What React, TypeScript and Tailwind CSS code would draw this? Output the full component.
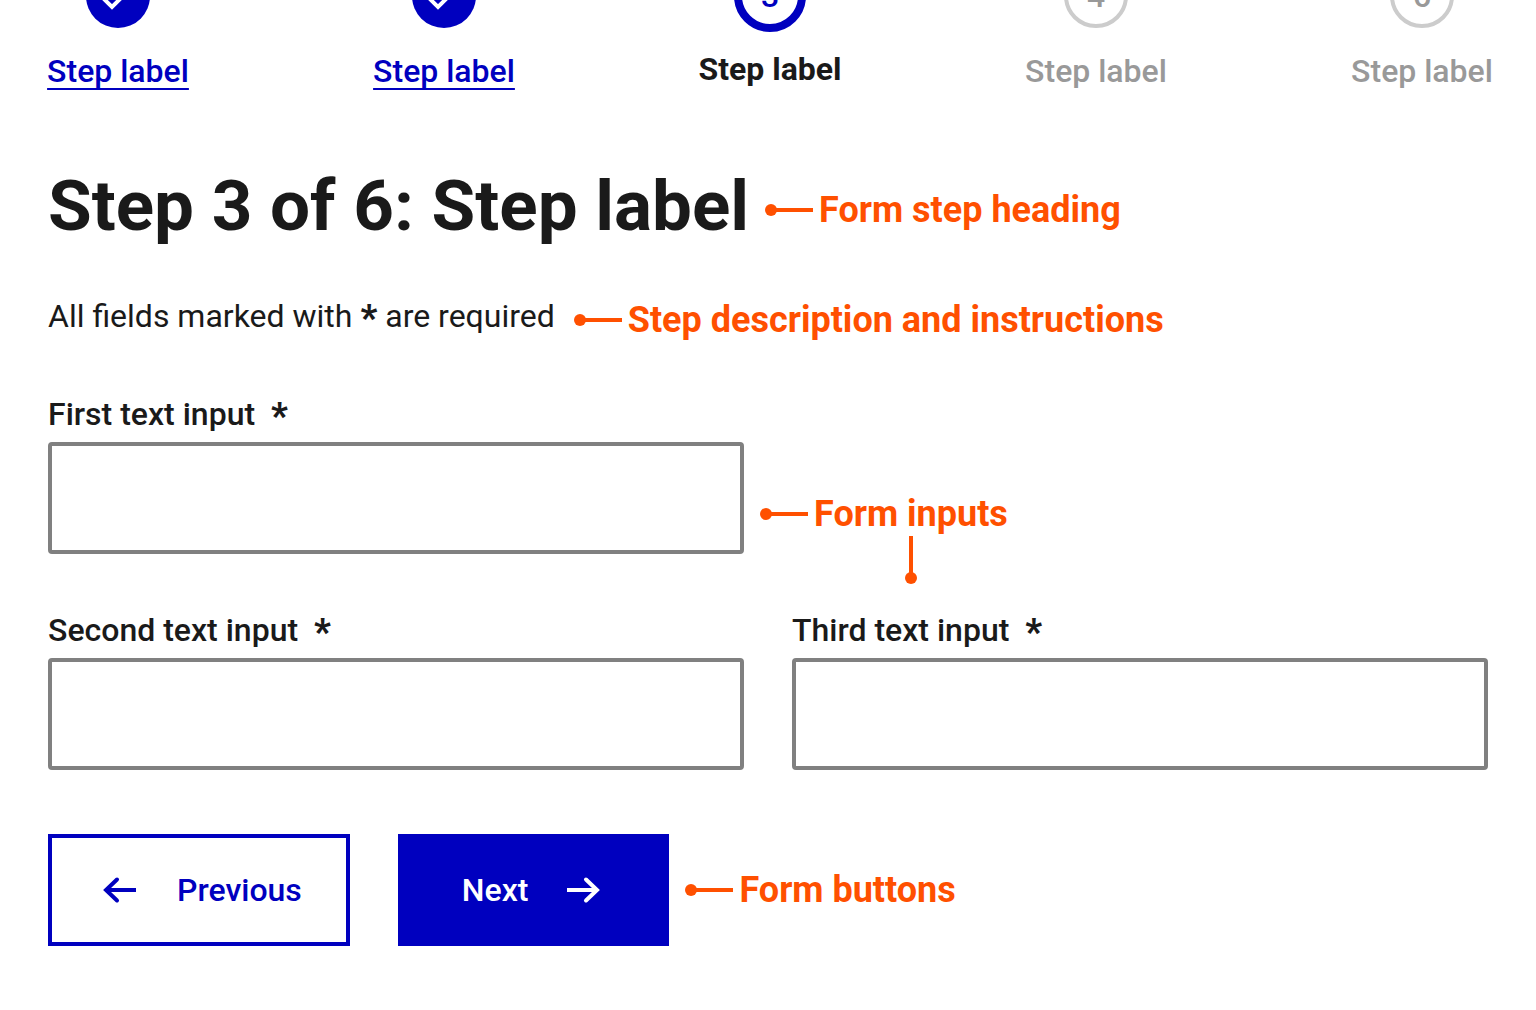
import type { ReactNode } from "react";

type StepState = "done" | "current" | "upcoming";

const steps: { number: number; state: StepState }[] = [
  { number: 1, state: "done" },
  { number: 2, state: "done" },
  { number: 3, state: "current" },
  { number: 4, state: "upcoming" },
  { number: 6, state: "upcoming" },
];

function Step({ number, state }: { number: number; state: StepState }) {
  if (state === "done") {
    return (
      <li className="flex w-36 flex-col items-center gap-[23px] pt-1">
        <span className="flex size-16 items-center justify-center rounded-full bg-[#0000bf]">
          <svg className="size-12" viewBox="0 0 48 48" fill="none" stroke="#fff" strokeWidth="4" aria-hidden="true">
            <path d="M8 25 18 35 39 14" />
          </svg>
        </span>
        <a href="#step" className="whitespace-nowrap font-medium leading-10 text-[#0000bf] underline decoration-2 underline-offset-6">
          Step label
        </a>
      </li>
    );
  }
  if (state === "current") {
    return (
      <li className="flex w-36 flex-col items-center gap-[17px]" aria-current="step">
        <span className="flex size-18 items-center justify-center rounded-full border-8 border-[#0000bf] font-medium text-[#0000bf]">
          {number}
        </span>
        <span className="whitespace-nowrap font-bold leading-10">Step label</span>
      </li>
    );
  }
  return (
    <li className="flex w-36 flex-col items-center gap-[23px] pt-1 text-[#999]">
      <span className="flex size-16 items-center justify-center rounded-full border-4 border-[#ccc] font-medium">
        {number}
      </span>
      <span className="whitespace-nowrap font-medium leading-10">Step label</span>
    </li>
  );
}

function Callout({ children }: { children: ReactNode }) {
  return (
    <div className="flex items-center gap-1.5 whitespace-nowrap text-4xl font-bold leading-10 text-[#ff5000]">
      <svg className="h-3 w-12 shrink-0" viewBox="0 0 48 12" fill="currentColor" aria-hidden="true">
        <circle cx="6" cy="6" r="6" />
        <path d="M6 4h42v4H6z" />
      </svg>
      {children}
    </div>
  );
}

function Field({ id, label }: { id: string; label: string }) {
  return (
    <div className="flex flex-col gap-2">
      <label htmlFor={id} className="flex h-10 gap-4 font-medium leading-10">
        {label}
        <span className="text-4xl font-black leading-11">*</span>
      </label>
      <input id={id} type="text" required className="h-28 w-full rounded-sm border-4 border-[#808080] bg-white px-6" />
    </div>
  );
}

export default function App() {
  return (
    <div className="overflow-hidden bg-white pb-16 font-['Roboto','Liberation_Sans',sans-serif] text-[32px] text-[#1a1a1a]">
      <nav aria-label="Form steps" className="-mt-10 pl-[46px] pr-[42px]">
        <ol className="flex justify-between">
          {steps.map((step) => (
            <Step key={step.number} number={step.number} state={step.state} />
          ))}
        </ol>
      </nav>

      <main className="px-12 pt-[75px]">
        <div className="flex items-center gap-4">
          <h1 className="whitespace-nowrap text-[71px] font-bold leading-20">Step 3 of 6: Step label</h1>
          <div className="pt-2">
            <Callout>Form step heading</Callout>
          </div>
        </div>

        <div className="mt-[50px] flex h-11 items-start gap-[19px]">
          <p className="flex gap-2 whitespace-nowrap leading-10">
            <span>All fields marked with</span>
            <span className="text-4xl font-black leading-11">*</span>
            <span>are required</span>
          </p>
          <div className="pt-1">
            <Callout>Step description and instructions</Callout>
          </div>
        </div>

        <form className="mt-[54px]" onSubmit={(event) => event.preventDefault()}>
          <div className="grid grid-cols-2 gap-x-12 gap-y-14">
            <div className="relative">
              <Field id="first" label="First text input" />
              <div className="absolute bottom-5 left-full ml-4">
                <Callout>
                  <span className="relative">
                    Form inputs
                    <svg
                      className="absolute left-1/2 top-full mt-0.5 h-12 w-3 -translate-x-1/2"
                      viewBox="0 0 12 48"
                      fill="currentColor"
                      aria-hidden="true"
                    >
                      <circle cx="6" cy="42" r="6" />
                      <path d="M4 0h4v42H4z" />
                    </svg>
                  </span>
                </Callout>
              </div>
            </div>
            <div />
            <Field id="second" label="Second text input" />
            <Field id="third" label="Third text input" />
          </div>

          <div className="mt-16 flex items-center">
            <button
              type="button"
              className="flex h-28 items-center gap-[37px] border-4 border-[#0000bf] bg-white pl-12 pr-11 font-medium text-[#0000bf]"
            >
              <svg className="size-10" viewBox="0 0 40 40" fill="none" stroke="currentColor" strokeWidth="4" aria-hidden="true">
                <path d="M17 9.5 6 20l11 10.5" strokeLinecap="round" />
                <path d="M6 20h30" />
              </svg>
              Previous
            </button>
            <button type="submit" className="ml-12 flex h-28 items-center gap-[37px] bg-[#0000bf] px-16 font-medium text-white">
              Next
              <svg className="size-10" viewBox="0 0 40 40" fill="none" stroke="currentColor" strokeWidth="4" aria-hidden="true">
                <path d="M21 9.5 32 20 21 30.5" strokeLinecap="round" />
                <path d="M32 20H2" />
              </svg>
            </button>
            <div className="ml-4">
              <Callout>Form buttons</Callout>
            </div>
          </div>
        </form>
      </main>
    </div>
  );
}
